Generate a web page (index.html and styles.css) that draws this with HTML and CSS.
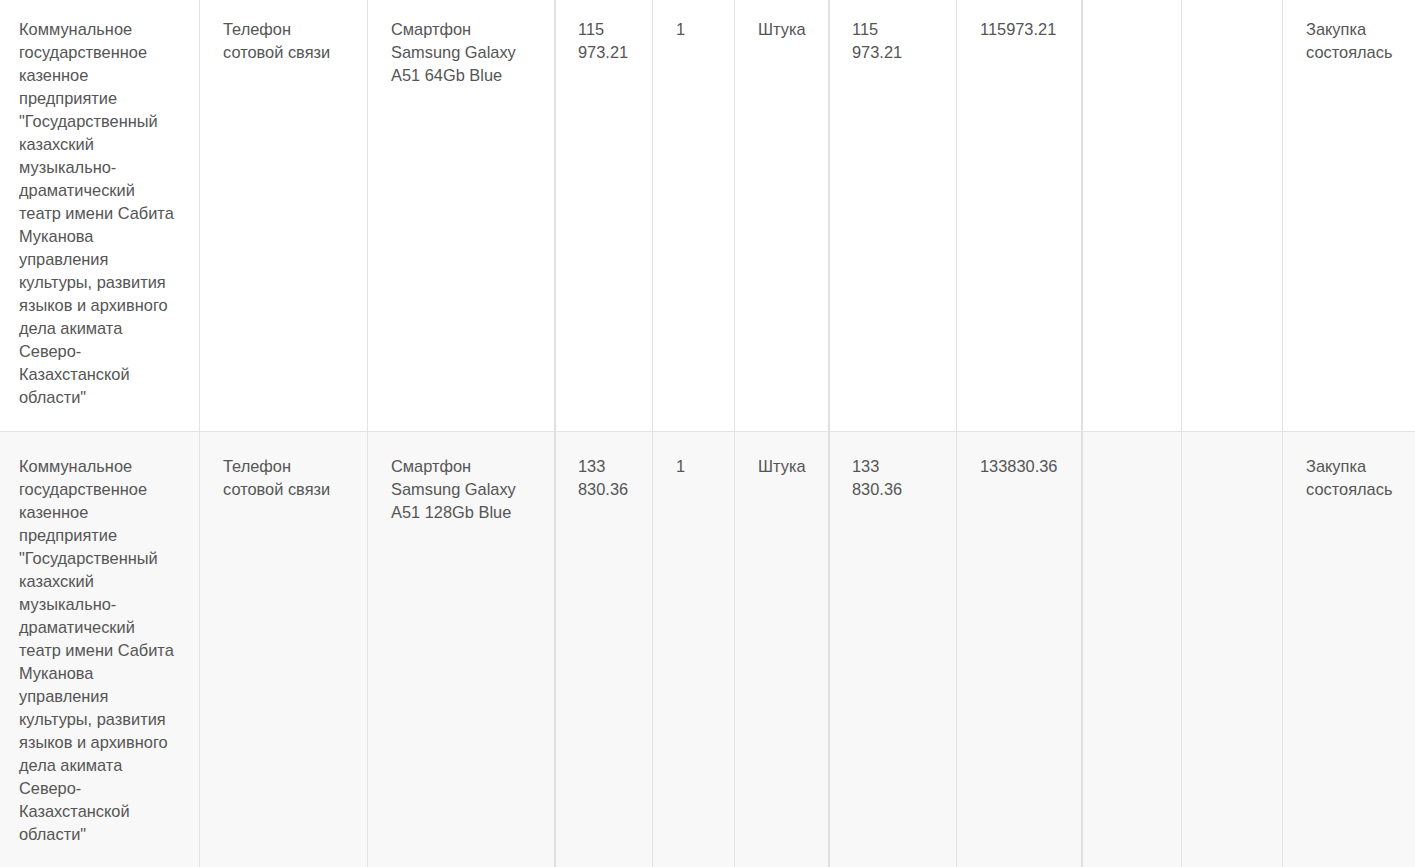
FILE: index.html
```html
<!DOCTYPE html>
<html lang="ru">
<head>
<meta charset="utf-8">
<link rel="stylesheet" href="styles.css">
<title>Закупки</title>
</head>
<body>
<table class="grid">
  <colgroup>
    <col class="w1"><col class="w2"><col class="w3"><col class="w4"><col class="w5"><col class="w6"><col class="w7"><col class="w8"><col class="w9"><col class="w10"><col class="w11">
  </colgroup>
  <tbody>
    <tr class="row">
      <td class="cell first">Коммунальное государственное казенное предприятие "Государственный казахский музыкально-драматический театр имени Сабита Муканова управления культуры, развития языков и архивного дела акимата Северо-Казахстанской области"</td>
      <td class="cell">Телефон сотовой связи</td>
      <td class="cell">Смартфон Samsung Galaxy A51 64Gb Blue</td>
      <td class="cell thick">115 973.21</td>
      <td class="cell">1</td>
      <td class="cell">Штука</td>
      <td class="cell thick">115 973.21</td>
      <td class="cell">115973.21</td>
      <td class="cell thick"></td>
      <td class="cell"></td>
      <td class="cell">Закупка состоялась</td>
    </tr>
    <tr class="row alt">
      <td class="cell first">Коммунальное государственное казенное предприятие "Государственный казахский музыкально-драматический театр имени Сабита Муканова управления культуры, развития языков и архивного дела акимата Северо-Казахстанской области"</td>
      <td class="cell">Телефон сотовой связи</td>
      <td class="cell">Смартфон Samsung Galaxy A51 128Gb Blue</td>
      <td class="cell thick">133 830.36</td>
      <td class="cell">1</td>
      <td class="cell">Штука</td>
      <td class="cell thick">133 830.36</td>
      <td class="cell">133830.36</td>
      <td class="cell thick"></td>
      <td class="cell"></td>
      <td class="cell">Закупка состоялась</td>
    </tr>
  </tbody>
</table>
</body>
</html>
```

FILE: styles.css
```css
html, body {
  margin: 0;
  padding: 0;
  background: #ffffff;
  overflow: hidden;
}

.grid {
  table-layout: fixed;
  border-collapse: separate;
  border-spacing: 0;
  width: 1427px;
  margin: -5px 0 0 -5px;
  font-family: "Liberation Sans", Arial, sans-serif;
  font-size: 16.4px;
  line-height: 23px;
  color: #555555;
}

.w1 { width: 204px; }
.w2 { width: 168px; }
.w3 { width: 187px; }
.w4 { width: 98px; }
.w5 { width: 82px; }
.w6 { width: 94px; }
.w7 { width: 128px; }
.w8 { width: 125px; }
.w9 { width: 100px; }
.w10 { width: 101px; }
.w11 { width: 140px; }

.row .cell {
  box-sizing: border-box;
  vertical-align: top;
  padding: 23px 22px 22px 23px;
  border-left: 1px solid #e3e3e3;
  border-bottom: 1px solid #e3e3e3;
  background: #ffffff;
}

.row .cell.first {
  border-left: none;
  padding-left: 24px;
}

.row .cell.thick {
  border-left: 2px solid #e0e0e0;
  padding-left: 22px;
  padding-right: 26px;
}

.row.alt .cell {
  background: #f8f8f8;
}
```
